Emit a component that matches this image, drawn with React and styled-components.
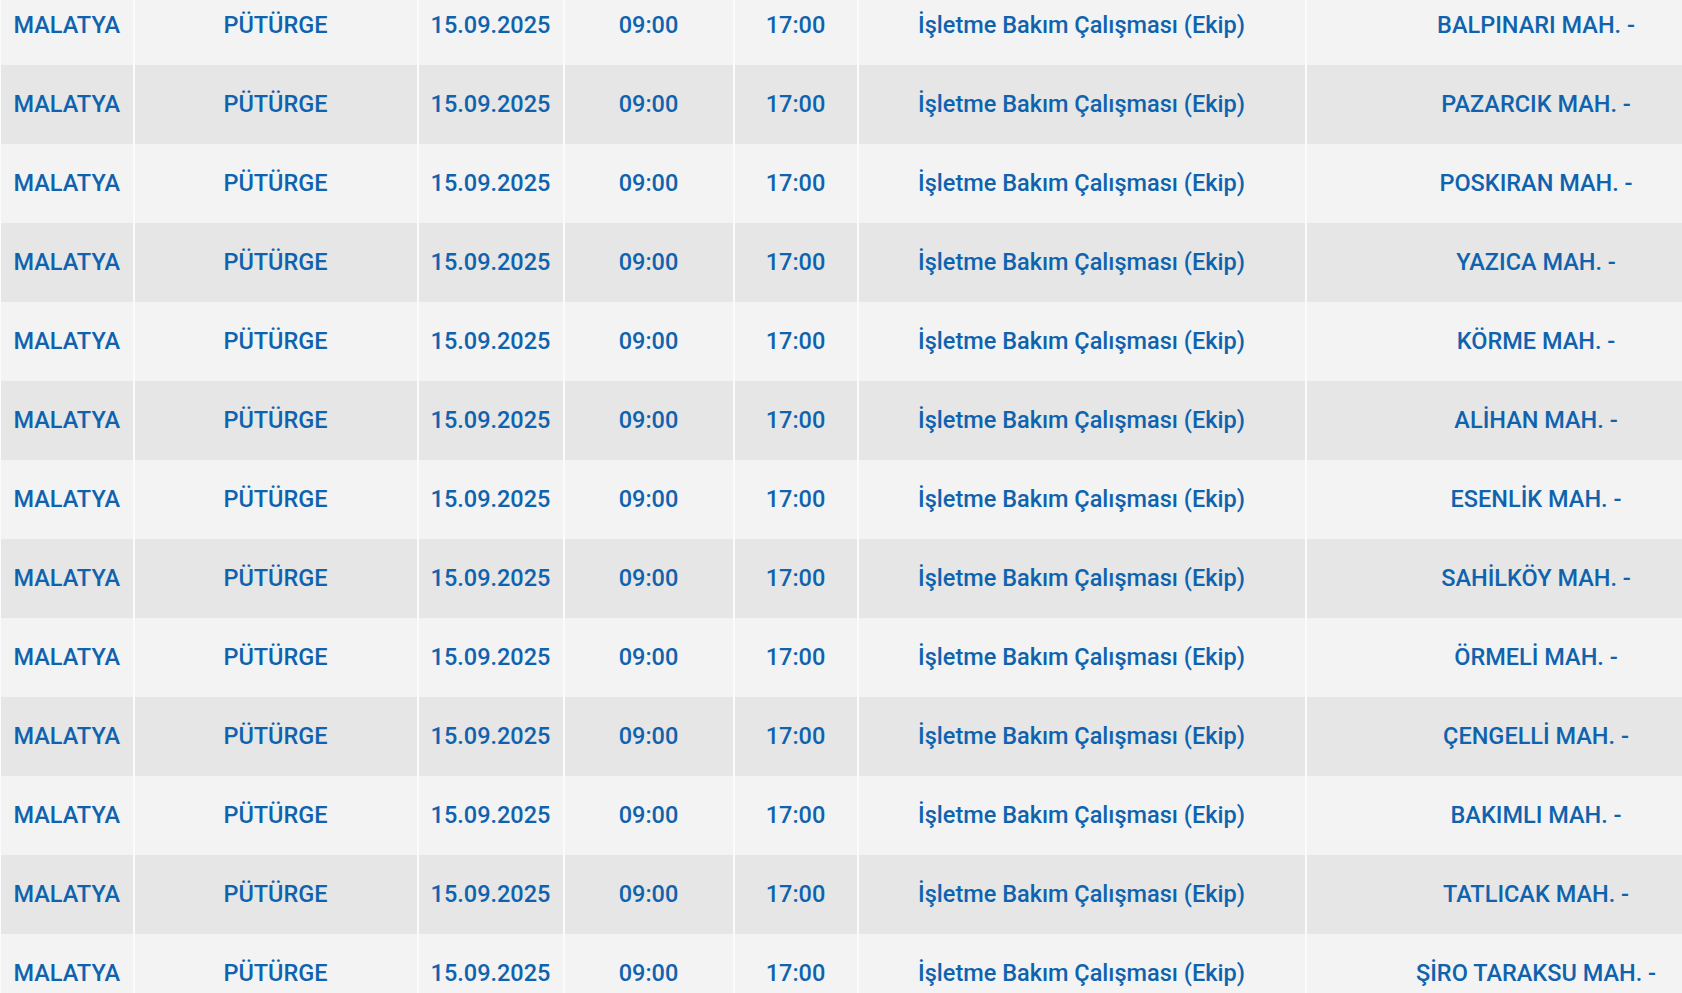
import React from 'react';
import styled, { createGlobalStyle } from 'styled-components';

const GlobalStyle = createGlobalStyle`
  html, body {
    margin: 0;
    padding: 0;
    background: #f3f3f3;
    overflow: hidden;
  }
  body {
    font-family: Roboto, "Liberation Sans", sans-serif;
  }
`;

const COLUMNS = [133, 284, 146, 170, 124, 448, 460];

const Wrapper = styled.div`
  width: 1682px;
  height: 993px;
  overflow: hidden;
`;

const Table = styled.table`
  border-collapse: collapse;
  table-layout: fixed;
  width: ${COLUMNS.reduce((a, b) => a + b, 0)}px;
  margin-top: -14px;
`;

const Row = styled.tr`
  height: 79px;
  background: ${(p) => (p.$dark ? '#e6e6e6' : '#f3f3f3')};
`;

const Cell = styled.td`
  padding: 0 0 2px;
  text-align: center;
  vertical-align: middle;
  color: #0f63ae;
  font-size: 23.5px;
  font-weight: 500;
  white-space: nowrap;
  border-left: 2px solid #fbfbfb;
  &:first-child {
    border-left: 1px solid #fbfbfb;
  }
`;

const districts = [
  'BALPINARI MAH. -',
  'PAZARCIK MAH. -',
  'POSKIRAN MAH. -',
  'YAZICA MAH. -',
  'KÖRME MAH. -',
  'ALİHAN MAH. -',
  'ESENLİK MAH. -',
  'SAHİLKÖY MAH. -',
  'ÖRMELİ MAH. -',
  'ÇENGELLİ MAH. -',
  'BAKIMLI MAH. -',
  'TATLICAK MAH. -',
  'ŞİRO TARAKSU MAH. -',
];

const App = () => (
  <Wrapper>
    <GlobalStyle />
    <Table>
      <colgroup>
        {COLUMNS.map((w, i) => (
          <col key={i} style={{ width: w }} />
        ))}
      </colgroup>
      <tbody>
        {districts.map((mahalle, i) => (
          <Row key={mahalle} $dark={i % 2 === 1}>
            <Cell>MALATYA</Cell>
            <Cell>PÜTÜRGE</Cell>
            <Cell>15.09.2025</Cell>
            <Cell>09:00</Cell>
            <Cell>17:00</Cell>
            <Cell>İşletme Bakım Çalışması (Ekip)</Cell>
            <Cell>{mahalle}</Cell>
          </Row>
        ))}
      </tbody>
    </Table>
  </Wrapper>
);

export default App;
